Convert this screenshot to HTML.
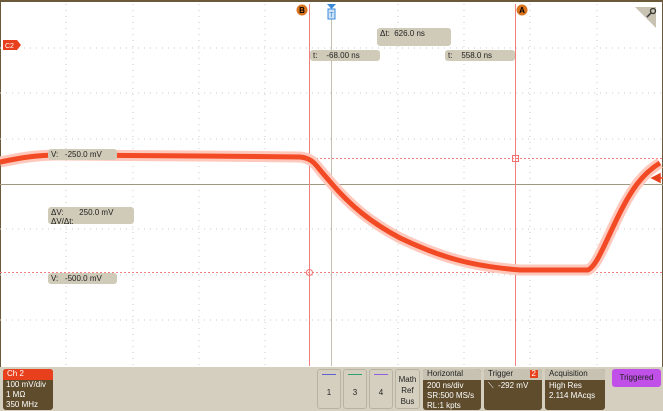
<!DOCTYPE html><html><head><style>
*{margin:0;padding:0;box-sizing:border-box}
body{width:663px;height:411px;overflow:hidden;background:#d5cfbf;font-family:"Liberation Sans",sans-serif;position:relative}
.plot{position:absolute;left:0;top:0;width:663px;height:367px;background:#fff;border-top:2px solid #6b5a3a;border-left:1px solid #6b5a3a;border-right:1px solid #6b5a3a}
.lbl{position:absolute;background:#d0cab8;border-radius:3px;font-size:8px;color:#222;padding:1px 3px;line-height:9px;height:11px}
.bx{position:absolute;border-radius:3px;font-size:8px;line-height:10px}
.hd{color:#fff;padding:0 4px;height:11px}
.btn{position:absolute;top:369px;height:40px;border:1px solid #b8b2a2;border-radius:3px;background:#d5cfbf;font-size:8px;text-align:center;color:#222}
</style></head><body>
<div class="plot"></div>
<svg style="position:absolute;left:0;top:0" width="663" height="367">
<g stroke="#c8c8c8" stroke-width="1" stroke-dasharray="1 5">
<line x1="66" y1="4" x2="66" y2="366"/><line x1="133" y1="4" x2="133" y2="366"/><line x1="199" y1="4" x2="199" y2="366"/><line x1="265" y1="4" x2="265" y2="366"/><line x1="398" y1="4" x2="398" y2="366"/><line x1="464" y1="4" x2="464" y2="366"/><line x1="530" y1="4" x2="530" y2="366"/><line x1="597" y1="4" x2="597" y2="366"/>
<line x1="0" y1="48" x2="663" y2="48"/><line x1="0" y1="93" x2="663" y2="93"/><line x1="0" y1="139" x2="663" y2="139"/><line x1="0" y1="229" x2="663" y2="229"/><line x1="0" y1="275" x2="663" y2="275"/><line x1="0" y1="320" x2="663" y2="320"/>
</g>
<line x1="0" y1="184.5" x2="663" y2="184.5" stroke="#a09880"/>
<line x1="331.5" y1="4" x2="331.5" y2="366" stroke="#c5bfae"/>
<line x1="309.5" y1="4" x2="309.5" y2="366" stroke="#f08080"/>
<line x1="515.5" y1="4" x2="515.5" y2="366" stroke="#f08080"/>
<g stroke="#f08080" stroke-dasharray="2 2"><line x1="0" y1="158.5" x2="663" y2="158.5"/><line x1="0" y1="272.5" x2="663" y2="272.5"/></g>
<rect x="512.5" y="155.5" width="6" height="6" fill="none" stroke="#f07070"/>
<circle cx="309.5" cy="272.5" r="3" fill="none" stroke="#f07070"/>
<path d="M0,162 C20,158 35,155 60,155 L200,156 L300,157 C310,158 314,162 320,170 L332,184 C350,205 370,222 400,238 C440,257 470,266 520,270 L588,270 C596,266 602,250 614,225 C628,195 640,175 660,163" fill="none" stroke="#ffc8bc" stroke-width="11" stroke-linejoin="round"/>
<path d="M0,162 C20,158 35,155 60,155 L200,156 L300,157 C310,158 314,162 320,170 L332,184 C350,205 370,222 400,238 C440,257 470,266 520,270 L588,270 C596,266 602,250 614,225 C628,195 640,175 660,163" fill="none" stroke="#f24a24" stroke-width="5" stroke-linejoin="round"/>
<circle cx="302" cy="10" r="5.5" fill="#d9741e"/><text x="302" y="13" font-size="8" font-weight="bold" text-anchor="middle" font-family="Liberation Sans">B</text>
<circle cx="522" cy="10" r="5.5" fill="#d9741e"/><text x="522" y="13" font-size="8" font-weight="bold" text-anchor="middle" font-family="Liberation Sans">A</text>
<path d="M327,4 L336,4 L331.5,9Z" fill="#3a8ad8"/>
<rect x="328" y="9" width="7" height="10" fill="#cfe3f7" stroke="#3a8ad8"/><text x="331.5" y="17" font-size="7" text-anchor="middle" fill="#3a8ad8" font-family="Liberation Sans">T</text>
<path d="M3,40 L17,40 L21,45 L17,50 L3,50Z" fill="#e8401c"/><text x="5" y="48" font-size="7" fill="#fff" font-family="Liberation Sans">C2</text>
<path d="M635,7 L656,7 L656,28Z" fill="#c8c2b2"/><circle cx="653" cy="11" r="2.5" fill="none" stroke="#333" stroke-width="1.3"/><line x1="651" y1="13" x2="647" y2="17" stroke="#333" stroke-width="1.5"/>
<path d="M652,178 L660,174 L660,182Z M655,178 L663,178" fill="#e8401c" stroke="#e8401c" stroke-width="1.5"/>
</svg>
<div class="lbl" style="left:377px;top:28px;width:74px;height:18px">Δt:&nbsp; 626.0 ns</div>
<div class="lbl" style="left:310px;top:50px;width:70px">t:&nbsp;&nbsp;&nbsp; -68.00 ns</div>
<div class="lbl" style="left:445px;top:50px;width:70px">t:&nbsp;&nbsp;&nbsp; 558.0 ns</div>
<div class="lbl" style="left:48px;top:149px;width:69px">V:&nbsp;&nbsp; -250.0 mV</div>
<div class="lbl" style="left:48px;top:207px;width:86px;height:17px">ΔV:&nbsp;&nbsp;&nbsp;&nbsp;&nbsp;&nbsp; 250.0 mV<br>ΔV/Δt:</div>
<div class="lbl" style="left:48px;top:273px;width:69px">V:&nbsp;&nbsp; -500.0 mV</div>
<div class="bx" style="left:3px;top:369px;width:50px;height:41px;background:#5e4c2c;overflow:hidden">
<div class="hd" style="background:#e8401c">Ch 2</div><div style="color:#fff;padding:0 3px">100 mV/div<br>1 MΩ<br>350 MHz</div></div>
<div class="btn" style="left:317px;width:24px"><div style="height:1px;background:#6060d0;margin:4px 4px 0"></div><div style="margin-top:13px">1</div></div>
<div class="btn" style="left:343px;width:24px"><div style="height:1px;background:#30a070;margin:4px 4px 0"></div><div style="margin-top:13px">3</div></div>
<div class="btn" style="left:369px;width:24px"><div style="height:1px;background:#9060e0;margin:4px 4px 0"></div><div style="margin-top:13px">4</div></div>
<div class="btn" style="left:395px;width:25px;line-height:11px;padding-top:4px">Math<br>Ref<br>Bus</div>
<div class="bx" style="left:423px;top:369px;width:58px;height:41px;background:#5e4c2c;overflow:hidden"><div class="hd" style="background:#c8c2b2;color:#222">Horizontal</div><div style="color:#fff;padding:1px 4px">200 ns/div<br>SR:500 MS/s<br>RL:1 kpts</div></div>
<div class="bx" style="left:484px;top:369px;width:58px;height:41px;background:#5e4c2c;overflow:hidden"><div class="hd" style="background:#c8c2b2;color:#222">Trigger <span style="float:right;background:#e8401c;color:#fff;padding:0 2px;margin-top:1px;line-height:8px">2</span></div><div style="color:#fff;padding:1px 4px">⟍&nbsp; -292 mV</div></div>
<div class="bx" style="left:545px;top:369px;width:60px;height:41px;background:#5e4c2c;overflow:hidden"><div class="hd" style="background:#c8c2b2;color:#222">Acquisition</div><div style="color:#fff;padding:1px 4px">High Res<br>2.114 MAcqs</div></div>
<div class="bx" style="left:612px;top:369px;width:49px;height:18px;background:#c050e8;color:#222;text-align:center;line-height:18px">Triggered</div>
</body></html>
